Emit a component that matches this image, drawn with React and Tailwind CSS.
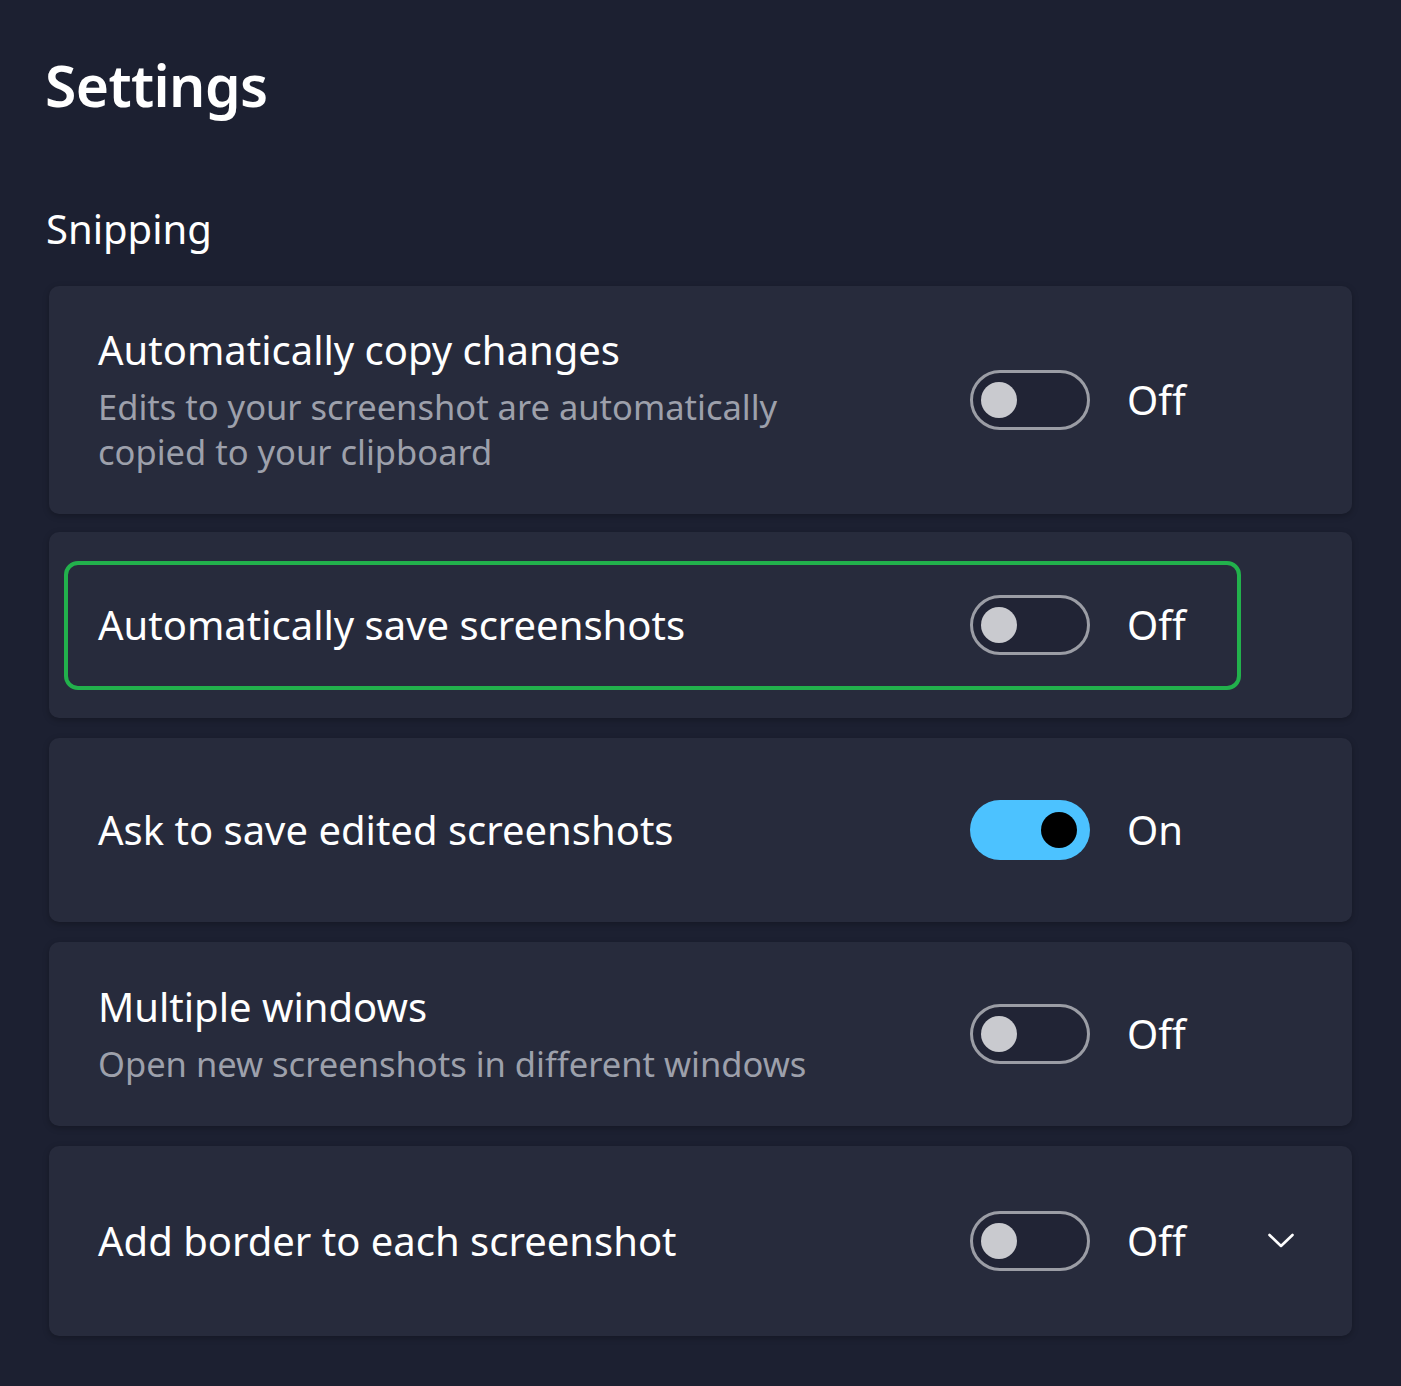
import { useState } from "react";

function Toggle({ on }) {
    if (on) {
        return (
            <div className="w-[120px] h-[60px] rounded-full bg-[#4cc2ff] flex items-center justify-end pr-[13px] shrink-0">
                <div className="w-[36px] h-[36px] rounded-full bg-black" />
            </div>
        )
    }
    return (
        <div className="w-[120px] h-[60px] rounded-full border-[3px] border-[#9b9da5] bg-[#212435] flex items-center pl-[8px] shrink-0">
            <div className="w-[36px] h-[36px] rounded-full bg-[#c9cacf]" />
        </div>
    )
}

function RowContent({ title, desc, on, chevron }) {
    return (
        <>
            <div className="w-[872px] shrink-0">
                <div className="text-[40px] leading-[48px] text-white">{title}</div>
                {desc && (
                    <div className="mt-[10px] w-[740px] text-[34.5px] leading-[45px] text-[#9da0ab]">{desc}</div>
                )}
            </div>
            <Toggle on={on} />
            <div className="ml-[37px] text-[40px] leading-[48px] text-white">{on ? 'On' : 'Off'}</div>
            {chevron && (
                <svg className="ml-auto mr-[58px]" width="26" height="16" viewBox="0 0 26 16" fill="none">
                    <polyline points="1.5,2 13,13 24.5,2" stroke="white" strokeWidth="2.6" strokeLinecap="round" strokeLinejoin="round" />
                </svg>
            )}
        </>
    )
}

export default function App() {
    const [rows] = useState([
        { id: 1, title: 'Automatically copy changes', desc: 'Edits to your screenshot are automatically copied to your clipboard', on: false, cls: 'h-[228px]' },
        { id: 2, title: 'Automatically save screenshots', on: false, cls: 'h-[186px] mt-[18px]', focus: true },
        { id: 3, title: 'Ask to save edited screenshots', on: true, cls: 'h-[184px] mt-[20px]' },
        { id: 4, title: 'Multiple windows', desc: 'Open new screenshots in different windows', on: false, cls: 'h-[184px] mt-[20px]' },
        { id: 5, title: 'Add border to each screenshot', on: false, cls: 'h-[190px] mt-[20px]', chevron: true },
    ])

    return (
        <div className="min-h-screen w-full bg-[#1c2031] font-['Noto_Sans',sans-serif] pt-[49px] pb-[50px]">
            <h1 className="pl-[45px] text-[57px] leading-[72px] font-semibold tracking-[-0.6px] text-white">Settings</h1>
            <h2 className="pl-[46px] mt-[84px] text-[40px] leading-[48px] text-white">Snipping</h2>
            <div className="mt-[33px] mx-[49px] flex flex-col">
                {rows.map(row => (
                    <div key={row.id} className={`${row.cls} rounded-[10px] bg-[#272b3c] shadow-[0_2px_6px_rgba(0,0,0,0.25)] flex items-center ${row.focus ? 'px-[15px]' : 'pl-[49px]'}`}>
                        {row.focus ? (
                            <div className="w-[1177px] h-[129px] border-4 border-[#22b14c] rounded-[14px] pl-[30px] flex items-center">
                                <RowContent title={row.title} on={row.on} />
                            </div>
                        ) : (
                            <RowContent title={row.title} desc={row.desc} on={row.on} chevron={row.chevron} />
                        )}
                    </div>
                ))}
            </div>
        </div>
    )
}
